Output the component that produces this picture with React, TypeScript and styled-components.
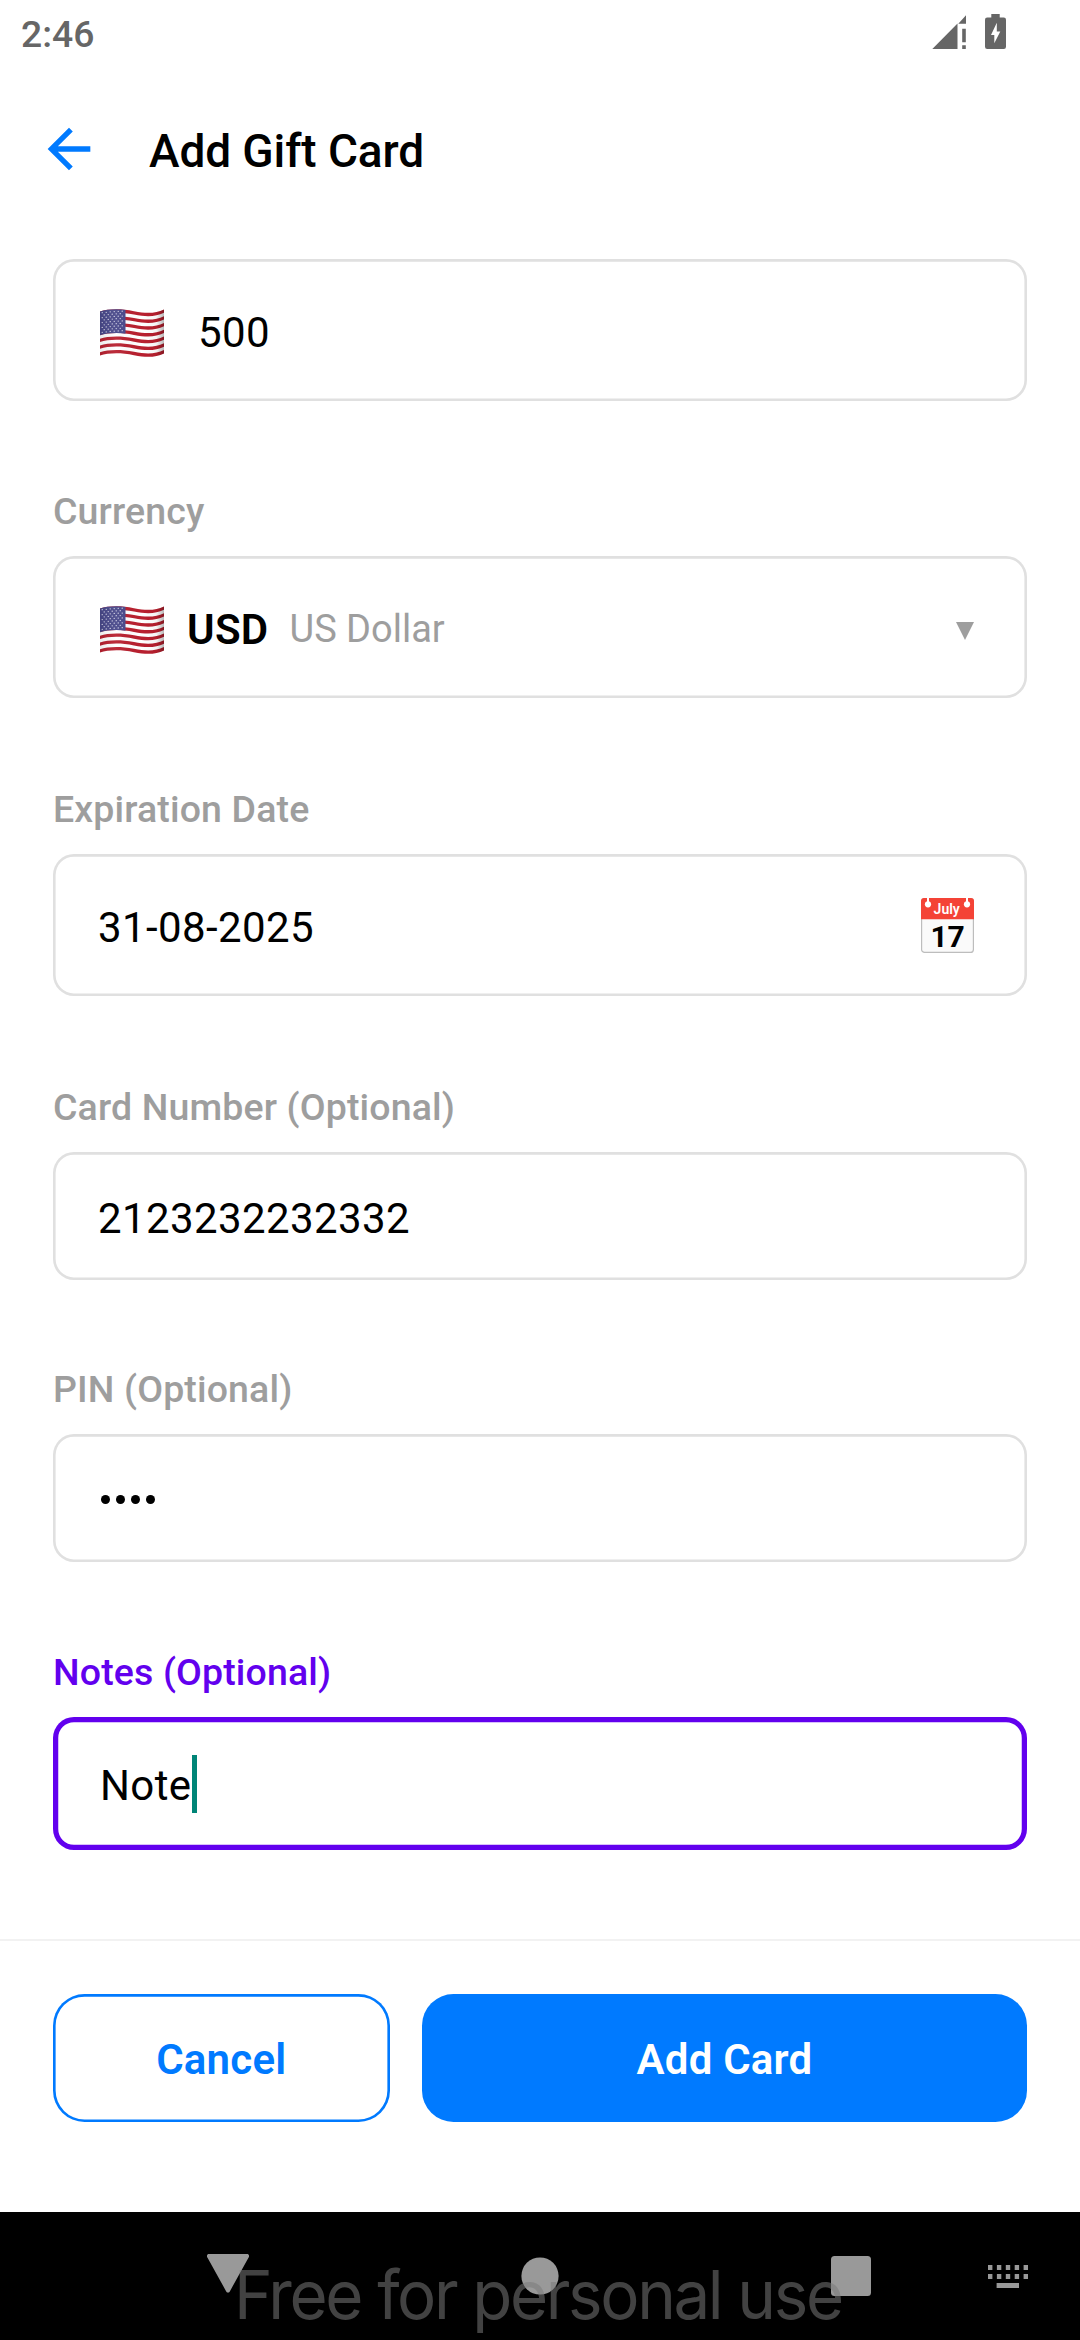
import React from "react";
import styled, { createGlobalStyle, css } from "styled-components";

const BLUE = "#007aff";
const PURPLE = "#6200ee";
const GREY = "#9e9e9e";

const GlobalStyle = createGlobalStyle`
  * { box-sizing: border-box; }
  body { margin: 0; background: #fff; }
`;

const Screen = styled.div`
  position: relative;
  display: flex;
  flex-direction: column;
  width: 1080px;
  height: 2340px;
  overflow: hidden;
  background: #fff;
  color: #000;
  font-family: Roboto, "Liberation Sans", sans-serif;
`;

const StatusBar = styled.div`
  display: flex;
  align-items: flex-start;
  justify-content: space-between;
  height: 66px;
  padding: 12px 74px 0 21px;
`;

const Clock = styled.span`
  font-size: 37.3px;
  line-height: 44px;
  font-weight: 500;
  color: #666;
`;

const StatusIcons = styled.div`
  display: flex;
  gap: 19px;
  padding-top: 2px;
  svg { display: block; }
`;

const Header = styled.header`
  display: flex;
  align-items: center;
  height: 166px;
  padding-left: 37px;
  gap: 48px;
`;

const BackIcon = styled.svg`
  display: block;
  width: 64px;
  height: 64px;
  fill: ${BLUE};
`;

const Title = styled.h1`
  margin: 0;
  padding-top: 4px;
  font-size: 46px;
  line-height: 56px;
  letter-spacing: -0.1px;
  font-weight: 500;
`;

const Form = styled.main`
  flex: 1;
  padding: 27px 53px 0;
`;

const Group = styled.section<{ $gap?: number }>`
  margin-top: ${(p) => p.$gap ?? 0}px;
`;

const Label = styled.label<{ $active?: boolean }>`
  display: block;
  height: 44px;
  margin-bottom: 23px;
  font-size: 37.5px;
  line-height: 44px;
  letter-spacing: 0.14px;
  font-weight: 500;
  color: ${(p) => (p.$active ? PURPLE : GREY)};
`;

const Field = styled.div<{ $height: number; $active?: boolean }>`
  display: flex;
  align-items: center;
  height: ${(p) => p.$height}px;
  padding: 0 53px 0 ${(p) => (p.$active ? 47 : 45)}px;
  border-radius: 21px;
  box-shadow: inset 0 0 0 ${(p) => (p.$active ? `5.25px ${PURPLE}` : "2.625px #e0e0e0")};
`;

const Value = styled.span<{ $indent?: number }>`
  padding-top: 5px;
  margin-left: ${(p) => p.$indent ?? 0}px;
  font-size: 42px;
  line-height: 50px;
  letter-spacing: 0.4px;
`;

const Code = styled(Value)`
  font-weight: 600;
  letter-spacing: 0.3px;
`;

const CurrencyName = styled.span`
  padding-top: 4px;
  margin-left: 21px;
  font-size: 38px;
  line-height: 46px;
  color: ${GREY};
`;

const Trailing = styled.svg`
  display: block;
  margin-left: auto;
`;

const Chevron = styled(Trailing)`
  margin-top: 8px;
`;

const FlagSvg = styled.svg`
  display: block;
  margin: 5px 0 0 2px;
`;

const PinDots = styled.span`
  display: flex;
  gap: 6px;
  margin: 2px 0 0 3px;
`;

const PinDot = styled.i`
  width: 9px;
  height: 9px;
  border-radius: 50%;
  background: #000;
`;

const Caret = styled.span`
  width: 5px;
  height: 58px;
  background: #008577;
`;

const Footer = styled.footer`
  display: grid;
  grid-template-columns: 336.5px 1fr;
  column-gap: 32.5px;
  height: 273px;
  padding: 53px 53px 0;
  border-top: 2px solid #f2f2f2;
`;

const Button = styled.button<{ $primary?: boolean }>`
  height: 128px;
  padding: 4px 0 0;
  border: 0;
  border-radius: 31.5px;
  font: 600 42px/50px Roboto, "Liberation Sans", sans-serif;
  letter-spacing: 0.2px;
  ${(p) =>
    p.$primary
      ? css`
          background: ${BLUE};
          color: #fff;
        `
      : css`
          background: #fff;
          color: ${BLUE};
          box-shadow: inset 0 0 0 2.625px ${BLUE};
        `}
`;

const NavBar = styled.nav`
  position: relative;
  display: flex;
  align-items: center;
  height: 128px;
  padding-left: 207px;
  background: #000;
  svg { display: block; fill: #999; }
`;

const NavIcon = styled.svg<{ $before?: number; $raise?: number }>`
  margin-left: ${(p) => p.$before ?? 0}px;
  margin-bottom: ${(p) => p.$raise ?? 0}px;
`;

const Watermark = styled.div`
  position: absolute;
  left: 234px;
  top: 42px;
  font-family: Inter, "Liberation Sans", sans-serif;
  font-size: 67.5px;
  line-height: 82px;
  letter-spacing: -2.45px;
  white-space: nowrap;
  color: rgba(122, 122, 122, 0.54);
  transform: scaleX(0.97);
  transform-origin: left center;
`;

const wave = (y: number) => `M0 ${y}C8 ${y - 2.6} 20 ${y - 3.2} 34 ${y - 0.4}S56 ${y + 1.4} 64 ${y - 2.2}`;
const waveBack = (y: number) => `L64 ${y - 2.2}C56 ${y + 1.4} 48 ${y + 2.4} 34 ${y - 0.4}S8 ${y - 2.6} 0 ${y}Z`;
const STRIPE = 44 / 13;

function Flag({ id }: { id: string }) {
  const stars: React.ReactNode[] = [];
  for (let r = 0; r < 9; r++) {
    const count = r % 2 ? 5 : 6;
    for (let c = 0; c < count; c++) {
      const x = 2.2 + c * 4 + (r % 2 ? 2 : 0);
      stars.push(<circle key={`${r}-${c}`} cx={x} cy={4 + r * 2.45 - Math.sin(x / 16) * 1.9} r={0.62} />);
    }
  }
  return (
    <FlagSvg width="64" height="48" viewBox="0 0 64 48">
      <defs>
        <linearGradient id={`${id}-shade`} x1="0" x2="1" y1="0" y2="0">
          <stop offset="0" stopColor="#000" stopOpacity="0.08" />
          <stop offset="0.25" stopColor="#fff" stopOpacity="0.06" />
          <stop offset="0.65" stopColor="#000" stopOpacity="0" />
          <stop offset="0.88" stopColor="#000" stopOpacity="0.04" />
          <stop offset="1" stopColor="#000" stopOpacity="0.28" />
        </linearGradient>
        <clipPath id={`${id}-canton`}>
          <rect x="0" y="0" width="25.5" height="48" />
        </clipPath>
      </defs>
      <path d={wave(2.6) + waveBack(46.6)} fill="#fff" />
      {[0, 2, 4, 6, 8, 10, 12].map((i) => (
        <path key={i} d={wave(2.6 + i * STRIPE) + waveBack(2.6 + (i + 1) * STRIPE)} fill="#b8202f" />
      ))}
      <path d={wave(2.6) + waveBack(2.6 + 7 * STRIPE)} fill="#48488a" clipPath={`url(#${id}-canton)`} />
      <g fill="#e4e4f2">{stars}</g>
      <path d={wave(2.6) + waveBack(46.6)} fill={`url(#${id}-shade)`} />
    </FlagSvg>
  );
}

function Calendar() {
  return (
    <Trailing width="53" height="55" viewBox="0 0 53 55">
      <rect x="0.6" y="0.6" width="51.8" height="53.8" rx="3" fill="#fafafa" stroke="#bdbdbd" strokeWidth="1.2" />
      <path d="M0 21.3V3a3 3 0 0 1 3-3h47a3 3 0 0 1 3 3v18.3z" fill="#f44336" />
      <path d="M6 0h2v5H6zM45 0h2v5h-2z" fill="#fff" />
      <circle cx="7" cy="6.3" r="3.1" fill="#fff" />
      <circle cx="46" cy="6.3" r="3.1" fill="#fff" />
      <text x="25.7" y="15.8" textAnchor="middle" fontSize="14" fontWeight="600" fill="#fff">July</text>
      <text x="26.6" y="49" textAnchor="middle" fontSize="30" fontWeight="700" fill="#000">17</text>
    </Trailing>
  );
}

export default function App() {
  return (
    <Screen>
      <GlobalStyle />
      <StatusBar>
        <Clock>2:46</Clock>
        <StatusIcons>
          <svg width="34" height="35" viewBox="932 14 34 35" fill="#666">
            <path d="M932.3 49L957.5 23.6V49zM958.3 23.8L966 15.3V23.8zM962.2 28.7h3.6v13.5h-3.6zM962.2 45.2h3.6V49h-3.6z" />
          </svg>
          <svg width="21" height="35" viewBox="985 14 21 35" fill="#666">
            <path
              fillRule="evenodd"
              d="M991.3 14h8.4v3.5h4.1a2.2 2.2 0 0 1 2.2 2.2v27.1a2.2 2.2 0 0 1-2.2 2.2h-16.6a2.2 2.2 0 0 1-2.2-2.2V19.7a2.2 2.2 0 0 1 2.2-2.2h4.1zM996.8 22.7L991 35h3.3v8.3L1000.3 31.5h-3.5z"
            />
          </svg>
        </StatusIcons>
      </StatusBar>
      <Header>
        <BackIcon viewBox="0 0 24 24">
          <path d="M20 11H7.83l5.59-5.59L12 4l-8 8 8 8 1.41-1.41L7.83 13H20v-2z" />
        </BackIcon>
        <Title>Add Gift Card</Title>
      </Header>
      <Form>
        <Group>
          <Field $height={142}>
            <Flag id="amount" />
            <Value $indent={34}>500</Value>
          </Field>
        </Group>
        <Group $gap={88}>
          <Label>Currency</Label>
          <Field $height={142}>
            <Flag id="currency" />
            <Code $indent={23}>USD</Code>
            <CurrencyName>US Dollar</CurrencyName>
            <Chevron width="18" height="18" viewBox="0 0 18 18">
              <path d="M0 0h18L9 18z" fill={GREY} />
            </Chevron>
          </Field>
        </Group>
        <Group $gap={89}>
          <Label>Expiration Date</Label>
          <Field $height={142}>
            <Value>31-08-2025</Value>
            <Calendar />
          </Field>
        </Group>
        <Group $gap={89}>
          <Label>Card Number (Optional)</Label>
          <Field $height={128}>
            <Value>2123232232332</Value>
          </Field>
        </Group>
        <Group $gap={87}>
          <Label>PIN (Optional)</Label>
          <Field $height={128}>
            <PinDots>
              <PinDot />
              <PinDot />
              <PinDot />
              <PinDot />
            </PinDots>
          </Field>
        </Group>
        <Group $gap={88}>
          <Label $active>Notes (Optional)</Label>
          <Field $height={133} $active>
            <Value>Note</Value>
            <Caret />
          </Field>
        </Group>
      </Form>
      <Footer>
        <Button>Cancel</Button>
        <Button $primary>Add Card</Button>
      </Footer>
      <NavBar>
        <NavIcon $raise={4} width="42" height="40" viewBox="0 0 42 40">
          <path d="M2 0h38c2 0 2.6 2 1.6 3.6L22.8 37.4c-.9 1.6-2.7 1.6-3.6 0L.4 3.6C-.6 2 0 0 2 0z" />
        </NavIcon>
        <NavIcon $before={272} width="38" height="38" viewBox="0 0 38 38">
          <circle cx="19" cy="19" r="18.6" />
        </NavIcon>
        <NavIcon $before={272} width="40" height="40" viewBox="0 0 40 40">
          <rect width="40" height="40" rx="3.5" />
        </NavIcon>
        <NavIcon $before={117} width="40" height="23" viewBox="0 0 40 23">
          {[0, 1, 2, 3, 4].map((i) => (
            <path key={i} d={`M${i * 8.9} 0h4.4v5h-4.4zM${i * 8.9} 9h4.4v5h-4.4z`} />
          ))}
          <rect x="8.6" y="18" width="22.4" height="5" />
        </NavIcon>
        <Watermark>Free for personal use</Watermark>
      </NavBar>
    </Screen>
  );
}
